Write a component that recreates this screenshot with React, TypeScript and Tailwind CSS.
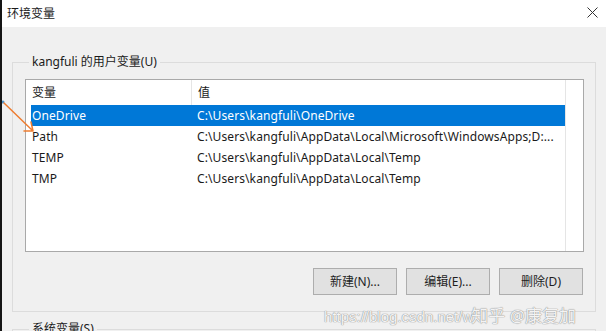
const rows = [
  { name: 'OneDrive', value: 'C:\\Users\\kangfuli\\OneDrive', selected: true },
  { name: 'Path', value: 'C:\\Users\\kangfuli\\AppData\\Local\\Microsoft\\WindowsApps;D:...' },
  { name: 'TEMP', value: 'C:\\Users\\kangfuli\\AppData\\Local\\Temp' },
  { name: 'TMP', value: 'C:\\Users\\kangfuli\\AppData\\Local\\Temp' },
]

const font = "font-['Noto_Sans','Noto_Sans_CJK_SC',sans-serif]"

const Button = ({ label }: { label: string }) => (
  <button className="w-[84px] h-[27px] bg-[#e1e1e1] border border-[#adadad] text-[12px] text-[#1e1e1e] leading-none">
    {label}
  </button>
)

const App = () => {
  return (
    <div className={`relative w-[606px] h-[331px] overflow-hidden bg-[#f0f0f0] border-l-2 border-[#151515] ${font}`}>
      {/* title bar */}
      <div className="flex items-center justify-between h-[27px] bg-white pl-[5px] pr-[8px]">
        <span className="text-[12px] text-[#1a1a1a]">环境变量</span>
        <svg width="11" height="11" viewBox="0 0 11 11" className="mt-[-2px]">
          <path d="M0.5 0.5 L10.5 10.5 M10.5 0.5 L0.5 10.5" stroke="#333" strokeWidth="1" />
        </svg>
      </div>

      <div className="px-[10px] pt-[27px]">
        <fieldset className="border border-[#dcdcdc] px-[12px] pb-[16px] pr-[11px]">
          <legend className="ml-[4px] px-[3px] text-[12px] leading-[16px] text-[#1a1a1a]">kangfuli 的用户变量(U)</legend>

          <div className="mt-[9px] h-[173px] bg-white border border-[#a9a9a9] flex">
            <div className="w-[539px] flex flex-col">
              <div className="flex h-[25px] items-center text-[12px] text-[#1a1a1a]">
                <div className="w-[166px] h-full flex items-center pl-[6px] border-r border-[#e5e5e5]">变量</div>
                <div className="pl-[6px]">值</div>
              </div>
              {rows.map((r) => (
                <div
                  key={r.name}
                  className={`flex h-[21px] items-center ml-[5px] text-[12px] tracking-[0.1px] ${r.selected ? 'bg-[#0078d7] text-white' : 'text-[#1a1a1a]'}`}
                >
                  <div className="w-[166px] pl-[1px]">{r.name}</div>
                  <div className="whitespace-nowrap">{r.value}</div>
                </div>
              ))}
            </div>
            <div className="border-l border-[#e5e5e5] flex-1" />
          </div>

          <div className="flex justify-end gap-[9px] mt-[16px] pr-[1px]">
            <Button label="新建(N)..." />
            <Button label="编辑(E)..." />
            <Button label="删除(D)" />
          </div>
        </fieldset>

        <fieldset className="mt-[9px] border border-[#dcdcdc] h-[40px] px-[12px]">
          <legend className="ml-[4px] px-[3px] text-[12px] leading-[16px] text-[#1a1a1a]">系统变量(S)</legend>
        </fieldset>
      </div>

      {/* annotation arrow */}
      <svg className="absolute left-0 top-[98px]" width="40" height="40" viewBox="0 0 40 40">
        <circle cx="1" cy="4" r="1.5" fill="#4a90c8" />
        <path d="M2 5 L31 33 M31 33 L22 33 M31 33 L29 24" stroke="#ee7d31" strokeWidth="1.5" fill="none" strokeLinecap="round" />
      </svg>

      {/* watermark */}
      <div className="absolute left-[322px] top-[303px] flex items-baseline whitespace-nowrap text-white/90 [text-shadow:0_0_1px_#888,0_0_1px_#888]">
        <span className="text-[15px] font-['Liberation_Sans',sans-serif]">https://blog.csdn.net/w</span>
        <span className="text-[17px] ml-[-2px]">知乎 @康复加</span>
      </div>
    </div>
  )
}

export default App
